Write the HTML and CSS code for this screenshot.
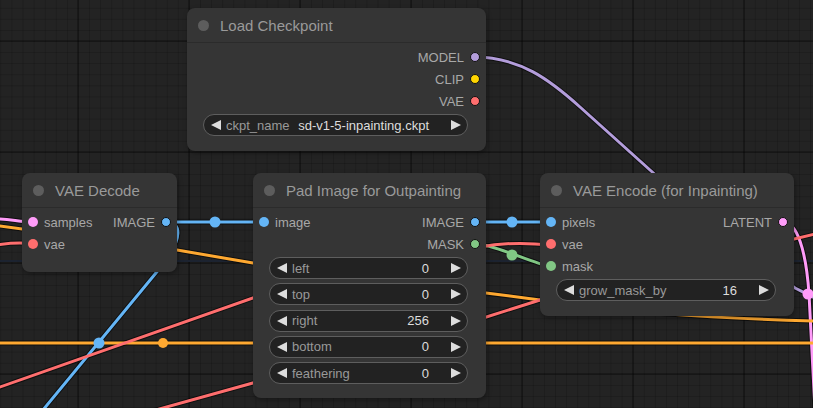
FILE: index.html
```html
<!DOCTYPE html>
<html>
<head>
<meta charset="utf-8">
<title>Graph</title>
<link rel="stylesheet" href="styles.css">
</head>
<body>
<div class="canvas">
  <svg class="links" width="813" height="408" viewBox="0 0 813 408">
    <path class="navy" d="M0,261 L813,261"/>
    <g class="edges">
      <path d="M474,57 C520,57 550,80 580,107 L690,206 L795,288 L815,298"/>
      <path d="M-4,219 C10,219 20,222 33,222"/>
      <path d="M783,222 C797,222 806,250 809,294 C811,330 813,370 815,410"/>
      <path d="M166,222 L264,222"/>
      <path d="M474,222 L551,222"/>
      <path d="M166,222 C182,222 182,238 165,262 L38,416"/>
      <path d="M474,243 C495,245 530,262 551,267"/>
      <path d="M-4,225.5 L177,250 L253,263 L486,293 L540,300 C620,312 700,318 815,321"/>
      <path d="M-4,343 L817,343"/>
      <path d="M-4,245 C10,243 20,242 33,244"/>
      <path d="M480,247 C500,243 520,242 551,245"/>
      <path d="M790,240 L815,234"/>
      <path d="M-4,388.4 L260,295.5"/>
      <path d="M150,411.6 L260,381"/>
      <path d="M480,319 L548,297.5"/>
    </g>
    <g class="wires">
      <path class="c-model" d="M474,57 C520,57 550,80 580,107 L690,206 L795,288 L815,298"/>
      <path class="c-latent" d="M-4,219 C10,219 20,222 33,222"/>
      <path class="c-latent" d="M783,222 C797,222 806,250 809,294 C811,330 813,370 815,410"/>
      <path class="c-image" d="M166,222 L264,222"/>
      <path class="c-image" d="M474,222 L551,222"/>
      <path class="c-image" d="M166,222 C182,222 182,238 165,262 L38,416"/>
      <path class="c-mask" d="M474,243 C495,245 530,262 551,267"/>
      <path class="c-cond" d="M-4,225.5 L177,250 L253,263 L486,293 L540,300 C620,312 700,318 815,321"/>
      <path class="c-cond" d="M-4,343 L817,343"/>
      <path class="c-vae" d="M-4,245 C10,243 20,242 33,244"/>
      <path class="c-vae" d="M480,247 C500,243 520,242 551,245"/>
      <path class="c-vae" d="M790,240 L815,234"/>
      <path class="c-vae" d="M-4,388.4 L260,295.5"/>
      <path class="c-vae" d="M150,411.6 L260,381"/>
      <path class="c-vae" d="M480,319 L548,297.5"/>
    </g>
    <g class="centers">
      <circle class="f-image" cx="215" cy="222" r="5.5"/>
      <circle class="f-image" cx="512" cy="222" r="5.5"/>
      <circle class="f-mask" cx="512" cy="255" r="5.5"/>
      <circle class="f-image" cx="99" cy="343" r="5.5"/>
      <circle class="f-cond" cx="163" cy="343" r="5"/>
      <circle class="f-latent" cx="808" cy="294" r="5.5"/>
    </g>
  </svg>

  <div class="node n-ckpt">
    <div class="title"><span class="tdot"></span><span>Load Checkpoint</span></div>
    <div class="body">
      <div class="row"><span></span><span class="out">MODEL<i class="dot model"></i></span></div>
      <div class="row"><span></span><span class="out">CLIP<i class="dot clip"></i></span></div>
      <div class="row"><span></span><span class="out">VAE<i class="dot vae"></i></span></div>
      <div class="widgets">
        <div class="widget"><i class="larr"></i><span class="label">ckpt_name</span><span class="value">sd-v1-5-inpainting.ckpt</span><i class="rarr"></i></div>
      </div>
    </div>
  </div>

  <div class="node n-decode">
    <div class="title"><span class="tdot"></span><span>VAE Decode</span></div>
    <div class="body">
      <div class="row"><span class="in"><i class="dot latent"></i>samples</span><span class="out">IMAGE<i class="dot image"></i></span></div>
      <div class="row"><span class="in"><i class="dot vae"></i>vae</span><span></span></div>
    </div>
  </div>

  <div class="node n-pad">
    <div class="title"><span class="tdot"></span><span>Pad Image for Outpainting</span></div>
    <div class="body">
      <div class="row"><span class="in"><i class="dot image"></i>image</span><span class="out">IMAGE<i class="dot image"></i></span></div>
      <div class="row"><span></span><span class="out">MASK<i class="dot mask"></i></span></div>
      <div class="widgets">
        <div class="widget"><i class="larr"></i><span class="label">left</span><span class="value">0</span><i class="rarr"></i></div>
        <div class="widget"><i class="larr"></i><span class="label">top</span><span class="value">0</span><i class="rarr"></i></div>
        <div class="widget"><i class="larr"></i><span class="label">right</span><span class="value">256</span><i class="rarr"></i></div>
        <div class="widget"><i class="larr"></i><span class="label">bottom</span><span class="value">0</span><i class="rarr"></i></div>
        <div class="widget"><i class="larr"></i><span class="label">feathering</span><span class="value">0</span><i class="rarr"></i></div>
      </div>
    </div>
  </div>

  <div class="node n-encode">
    <div class="title"><span class="tdot"></span><span>VAE Encode (for Inpainting)</span></div>
    <div class="body">
      <div class="row"><span class="in"><i class="dot image"></i>pixels</span><span class="out">LATENT<i class="dot latent"></i></span></div>
      <div class="row"><span class="in"><i class="dot vae"></i>vae</span><span></span></div>
      <div class="row"><span class="in"><i class="dot mask"></i>mask</span><span></span></div>
      <div class="widgets">
        <div class="widget"><i class="larr"></i><span class="label">grow_mask_by</span><span class="value">16</span><i class="rarr"></i></div>
      </div>
    </div>
  </div>
</div>
</body>
</html>
```

FILE: styles.css
```css
html, body {
  margin: 0;
  padding: 0;
  background: #222222;
}

body {
  font-family: "Liberation Sans", Arial, sans-serif;
}

.canvas {
  position: relative;
  width: 813px;
  height: 408px;
  overflow: hidden;
  background-color: #232323;
  background-image:
    linear-gradient(to right, rgba(0, 0, 0, 0.28) 2px, transparent 2px),
    linear-gradient(to bottom, rgba(0, 0, 0, 0.28) 2px, transparent 2px),
    linear-gradient(to right, rgba(0, 0, 0, 0.16) 1px, transparent 1px),
    linear-gradient(to bottom, rgba(0, 0, 0, 0.16) 1px, transparent 1px);
  background-size: 111px 111px, 111px 111px, 11.1px 11.1px, 11.1px 11.1px;
  background-position: 77px 40px, 77px 40px, 78px 41px, 78px 41px;
}

.links {
  position: absolute;
  left: 0;
  top: 0;
}

.links path {
  fill: none;
  stroke-linecap: round;
  stroke-linejoin: round;
}

.navy {
  stroke: #1c2330;
  stroke-width: 2;
}

.edges path {
  stroke: rgba(0, 0, 0, 0.55);
  stroke-width: 5;
}

.wires path {
  stroke-width: 3;
}

.c-model { stroke: #b39ddb; }
.c-latent { stroke: #ff9cf9; }
.c-image { stroke: #64b5f6; }
.c-mask { stroke: #81c784; }
.c-cond { stroke: #ffa931; }
.c-vae { stroke: #ff6e6e; }

.f-image { fill: #64b5f6; }
.f-mask { fill: #81c784; }
.f-cond { fill: #ffa931; }
.f-latent { fill: #ff9cf9; }

.node {
  position: absolute;
  box-sizing: border-box;
  background: #353535;
  border-radius: 8px;
  box-shadow: 1px 2px 5px rgba(0, 0, 0, 0.35);
  display: flex;
  flex-direction: column;
}

.n-ckpt { left: 187px; top: 8px; width: 299px; height: 143px; }
.n-decode { left: 22px; top: 173px; width: 155px; height: 99px; }
.n-pad { left: 253px; top: 173px; width: 233px; height: 225px; }
.n-encode { left: 540px; top: 173px; width: 254px; height: 143px; }

.title {
  height: 34px;
  flex: none;
  border-bottom: 1px solid #2b2b2b;
  display: flex;
  align-items: center;
  gap: 11px;
  padding-left: 11px;
  color: #9a9a9a;
  font-size: 15px;
  white-space: nowrap;
}

.tdot {
  width: 11px;
  height: 11px;
  border-radius: 50%;
  background: #5d5d5d;
  flex: none;
}

.body {
  padding-top: 3px;
  display: flex;
  flex-direction: column;
}

.row {
  height: 22px;
  display: flex;
  align-items: center;
  justify-content: space-between;
  font-size: 13px;
  color: #a8a8a8;
  white-space: nowrap;
}

.in {
  display: flex;
  align-items: center;
  gap: 6px;
  padding-left: 6px;
}

.out {
  display: flex;
  align-items: center;
  gap: 6px;
  padding-right: 6px;
}

.dot {
  display: block;
  width: 10px;
  height: 10px;
  border-radius: 50%;
  flex: none;
}

.out .dot {
  width: 8px;
  height: 8px;
  border: 1px solid #111111;
}

.model { background: #b39ddb; }
.clip { background: #ffd500; }
.vae { background: #ff6e6e; }
.image { background: #64b5f6; }
.mask { background: #81c784; }
.latent { background: #ff9cf9; }

.widgets {
  display: flex;
  flex-direction: column;
  gap: 4.3px;
  margin: 2px 18px 0 16px;
}

.widget {
  height: 22px;
  box-sizing: border-box;
  border: 1px solid #5e5e5e;
  background: #222222;
  border-radius: 11px;
  display: flex;
  align-items: center;
  padding: 0 6px 0 7px;
  font-size: 13px;
  white-space: nowrap;
}

.larr {
  display: block;
  width: 0;
  height: 0;
  border-top: 5.5px solid transparent;
  border-bottom: 5.5px solid transparent;
  border-right: 10px solid #dddddd;
  margin-right: 5px;
  flex: none;
}

.rarr {
  display: block;
  width: 0;
  height: 0;
  border-top: 5.5px solid transparent;
  border-bottom: 5.5px solid transparent;
  border-left: 10px solid #dddddd;
  margin-left: 22px;
  flex: none;
}

.label {
  color: #999999;
}

.value {
  color: #dddddd;
  margin-left: auto;
}
```
